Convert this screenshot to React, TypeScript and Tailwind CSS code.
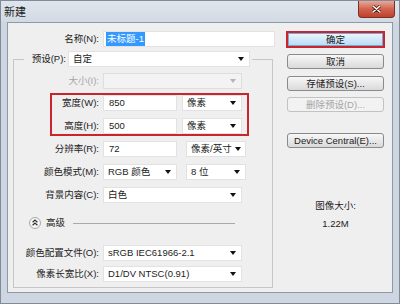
import clsx from 'clsx';

function Caret({ disabled }: { disabled?: boolean }) {
  return (
    <span
      className={clsx(
        'ml-auto shrink-0 w-0 h-0 border-l-[3.5px] border-r-[3.5px] border-t-[4px] border-l-transparent border-r-transparent',
        disabled ? 'border-t-[#b4b4b4]' : 'border-t-[#111]'
      )}
    />
  );
}

function Select({ value, w, disabled }: { value?: string; w: string; disabled?: boolean }) {
  return (
    <div
      className={clsx(
        'flex items-center h-[16px] border pl-[4px] pr-[5px] shrink-0',
        disabled ? 'bg-[#f3f3f3] border-[#dedede]' : 'bg-white border-[#e2e2e2]',
        w
      )}
    >
      <span className="whitespace-nowrap mr-[3px]">{value}</span>
      <Caret disabled={disabled} />
    </div>
  );
}

function Field({ value, w }: { value: string; w: string }) {
  return (
    <div className={clsx('flex items-center h-[16px] bg-white border border-[#e2e2e2] pl-[5px] shrink-0', w)}>
      {value}
    </div>
  );
}

function Label({ text, w, disabled }: { text: string; w: string; disabled?: boolean }) {
  return (
    <span className={clsx('text-right whitespace-nowrap shrink-0', w, disabled && 'text-[#a6a6a6]')}>{text}</span>
  );
}

function Button({ text, disabled }: { text: string; disabled?: boolean }) {
  return (
    <div
      className={clsx(
        'ml-[1px] w-[97px] h-[15px] rounded-[3px] border flex items-center justify-center whitespace-nowrap',
        disabled
          ? 'border-[#c2c2c2] bg-[#f2f2f2] text-[#a6a6a6]'
          : 'border-[#8a8a8a] bg-linear-to-b from-[#f7f7f7] to-[#dadada]'
      )}
    >
      {text}
    </div>
  );
}

export default function App() {
  return (
    <div className="w-[400px] h-[304px] flex flex-col bg-[#cdd6e1] border border-[#7f8b98] overflow-hidden font-['Liberation_Sans','Noto_Sans_CJK_SC',sans-serif] text-[9.5px] leading-none text-[#1c1c1c]">
      {/* title bar */}
      <div className="h-[21px] flex items-start bg-linear-to-b from-[#dfe5ec] to-[#d2dae4] shrink-0">
        <span className="pl-[3px] pt-[6px] text-[11px]">新建</span>
        <div className="ml-auto mr-[4px] w-[37px] h-[17px] rounded-b-[4px] border border-t-0 border-[#7b3024] bg-linear-to-b from-[#e7a898] via-[#d0644f] to-[#c0402b] flex items-center justify-center">
          <svg width="9" height="8" viewBox="0 0 9 8">
            <path d="M1 1 L8 7 M8 1 L1 7" stroke="#5a1a12" strokeWidth="3" strokeLinecap="round" />
            <path d="M1 1 L8 7 M8 1 L1 7" stroke="#fff" strokeWidth="1.6" strokeLinecap="round" />
          </svg>
        </div>
      </div>

      {/* frame + client */}
      <div className="flex-1 flex px-[6px] pb-[10px]">
        <div className="flex-1 flex bg-[#efefef] border border-[#8e99a6]">
          {/* left column */}
          <div className="w-[278px] flex flex-col pt-[8px]">
            <div className="flex items-center gap-[4px]">
              <Label text="名称(N):" w="w-[91px]" />
              <div className="flex items-center h-[16px] w-[172px] bg-white border border-[#e2e2e2] pl-[2px]">
                <span className="bg-[#3399ff] text-white px-[1px] py-[2px]">未标题-1</span>
              </div>
            </div>

            {/* group box */}
            <div className="mt-[12px] ml-[5px] w-[260px] h-[229px] border border-[#c6c6c6] flex flex-col">
              <div className="-mt-[9px] ml-[10px] self-start flex items-center gap-[2px] px-[2px] bg-[#efefef]">
                <Label text="预设(P):" w="w-[40px]" />
                <Select value="自定" w="w-[182px]" />
              </div>

              <div className="mt-[6px] flex items-center gap-[4px]">
                <Label text="大小(I):" w="w-[85px]" disabled />
                <Select w="w-[139px]" disabled />
              </div>

              <div className="mt-[4px] ml-[36px] w-[199px] border-2 border-[#c8262c] flex flex-col gap-[7px]">
                <div className="flex items-center">
                  <Label text="宽度(W):" w="w-[47px]" />
                  <div className="w-[4px]" />
                  <Field value="850" w="w-[74px]" />
                  <div className="w-[5px]" />
                  <Select value="像素" w="w-[60px]" />
                </div>
                <div className="flex items-center">
                  <Label text="高度(H):" w="w-[47px]" />
                  <div className="w-[4px]" />
                  <Field value="500" w="w-[74px]" />
                  <div className="w-[5px]" />
                  <Select value="像素" w="w-[60px]" />
                </div>
              </div>

              <div className="mt-[5px] flex items-center gap-[4px]">
                <Label text="分辨率(R):" w="w-[85px]" />
                <Field value="72" w="w-[74px]" />
                <div className="w-[1px]" />
                <Select value="像素/英寸" w="w-[60px]" />
              </div>
              <div className="mt-[7px] flex items-center gap-[4px]">
                <Label text="颜色模式(M):" w="w-[85px]" />
                <Select value="RGB 颜色" w="w-[74px]" />
                <div className="w-[1px]" />
                <Select value="8 位" w="w-[60px]" />
              </div>
              <div className="mt-[7px] flex items-center gap-[4px]">
                <Label text="背景内容(C):" w="w-[85px]" />
                <Select value="白色" w="w-[139px]" />
              </div>

              {/* advanced */}
              <div className="mt-[14px] flex items-center h-[12px]">
                <svg className="ml-[15px]" width="12" height="12" viewBox="0 0 12 12">
                  <circle cx="6" cy="6" r="5.5" fill="#f6f6f6" stroke="#a9a9a9" />
                  <path d="M3.6 5.2 L6 3 L8.4 5.2 M3.6 8.2 L6 6 L8.4 8.2" fill="none" stroke="#333" strokeWidth="1.2" />
                </svg>
                <span className="ml-[5px]">高级</span>
                <div className="ml-[8px] mr-[37px] flex-1 h-px bg-[#a9a9a9]" />
              </div>

              <div className="mt-[16px] flex items-center gap-[4px]">
                <Label text="颜色配置文件(O):" w="w-[85px]" />
                <Select value="sRGB IEC61966-2.1" w="w-[139px]" />
              </div>
              <div className="mt-[5px] flex items-center gap-[4px]">
                <Label text="像素长宽比(X):" w="w-[85px]" />
                <Select value="D1/DV NTSC(0.91)" w="w-[139px]" />
              </div>
            </div>
          </div>

          {/* right column */}
          <div className="w-[99px] flex flex-col pt-[8px]">
            <div className="h-[17px] border-2 border-[#c8262c] flex">
              <div className="flex-1 border border-[#78a9d2] bg-linear-to-b from-[#e8f4fd] to-[#bcdcf4] flex items-center justify-center">
                确定
              </div>
            </div>
            <div className="mt-[6px]">
              <Button text="取消" />
            </div>
            <div className="mt-[7px]">
              <Button text="存储预设(S)..." />
            </div>
            <div className="mt-[6px]">
              <Button text="删除预设(D)..." disabled />
            </div>
            <div className="mt-[21px]">
              <Button text="Device Central(E)..." />
            </div>
            <div className="mt-[52px] text-center leading-[12px]">图像大小:</div>
            <div className="mt-[6px] text-center leading-[12px]">1.22M</div>
          </div>
        </div>
      </div>
    </div>
  );
}
